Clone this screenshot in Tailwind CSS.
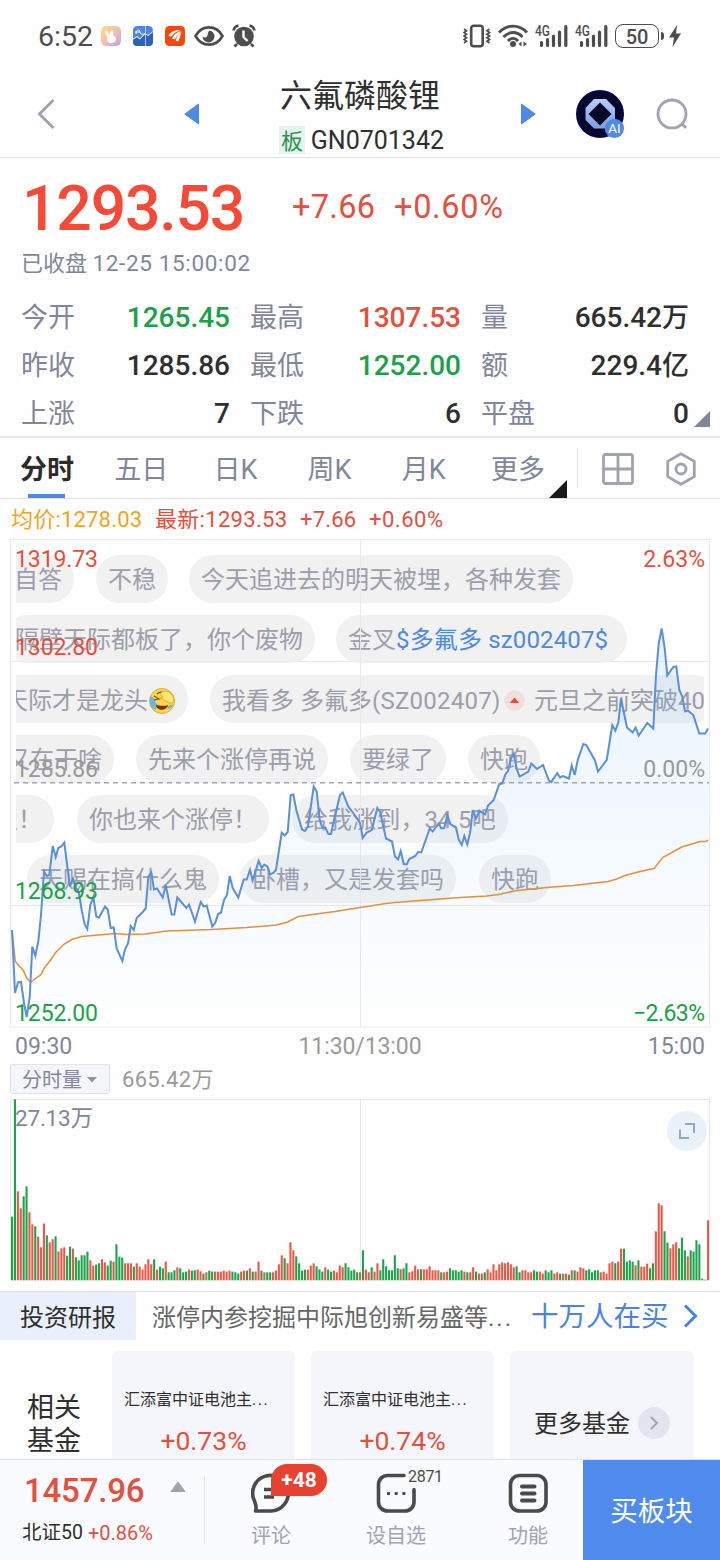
<!DOCTYPE html>
<html lang="zh-CN">
<head>
<meta charset="utf-8">
<title>六氟磷酸锂</title>
<script src="https://cdn.jsdelivr.net/npm/@tailwindcss/browser@4"></script>
</head>
<body class="w-[720px] h-[1560px] overflow-hidden bg-[#fefefe] font-[Roboto,'Noto_Sans_CJK_SC',sans-serif] text-[#2f2f2f] flex flex-col">

<!-- status bar -->
<div class="h-[72px] flex items-center shrink-0 pl-[38px] pr-[39px] text-[#4d4d4d]">
  <span class="text-[28.5px] leading-none w-[63px] pt-[2px]">6:52</span>
  <svg class="w-5 h-5" viewBox="0 0 20 20"><defs><linearGradient id="rb" x1="0" y1="0" x2="1" y2="1"><stop offset="0" stop-color="#fbe07a"/><stop offset=".5" stop-color="#f3bfb0"/><stop offset="1" stop-color="#b9a6f0"/></linearGradient></defs><rect width="20" height="20" rx="5" fill="url(#rb)"/><path d="M4.500 5c1.200-1 3 1.500 4.200 4 .2-2.500.8-5 2.300-4.800s1.500 3 1.200 5.300c2.300.8 3.300 3 2.600 5-1 2.800-5.800 3.300-7.800 1.200-1.200-1.300-1-3-.2-4.300C5.300 9.500 3.300 6.200 4.500 5z" fill="#fff"/></svg>
  <svg class="w-5 h-5 ml-3" viewBox="0 0 20 20"><rect width="20" height="20" rx="4.500" fill="#4a86e0"/><path d="M0 14l4-2.500 3 2 5-5 3 1.500 5-4V16a4 4 0 0 1-4 4H4a4 4 0 0 1-4-4z" fill="#2f63b8"/><path d="M0 13l4-2.500 3 2.500 5-5.500 3 2 5-4M2 6h5M3 8c0-5 4-5 4-2s3 2 5 2" fill="none" stroke="#fff" stroke-width="1"/><path d="M12.500 0v20" stroke="#cfe0fa" stroke-width=".8"/></svg>
  <svg class="w-5 h-5 ml-3" viewBox="0 0 20 20"><rect width="20" height="20" rx="4.500" fill="#f5480c"/><path d="M3.500 10C5 6 10 3.500 15.500 4.500 12 5.500 8.500 7 6.500 10.500zM7 12.500C8.500 9 12 6 16 5 13.500 7.500 11.500 10 10 13.500zM10.800 14.500c.5-3.500 2.700-6.500 5.400-8.700-.8 3.200-1.200 6.700-3.200 9.700z" fill="#fff"/></svg>
  <svg class="w-[30px] h-5 ml-[9px]" viewBox="0 0 30 20"><path d="M1.500 10C8-1.500 22-1.500 28.500 10 22 21.500 8 21.500 1.500 10z" fill="none" stroke="#4d4d4d" stroke-width="2.600"/><path d="M15.500 4.500a6 6 0 1 1-7 6c1.500 1.500 4 1 4.800-.6 .9-1.800.2-4 2.200-5.400z" fill="#4d4d4d"/></svg>
  <svg class="w-6 h-6 ml-2" viewBox="0 0 24 24"><circle cx="12" cy="12.500" r="9.800" fill="#4d4d4d"/><path d="M1.500 6.500C2 4 4 2 6.500 1.500M17.500 1.500C20 2 22 4 22.500 6.500M5 20l-2.500 2.500M19 20l2.500 2.500" stroke="#4d4d4d" stroke-width="2.600" fill="none"/><path d="M11.500 6.500v6.500l4 4" stroke="#fefefe" stroke-width="2.400" fill="none"/></svg>
  <div class="flex-1"></div>
  <svg class="w-7 h-6 mr-[7px]" viewBox="0 0 28 24" fill="none" stroke="#4d4d4d"><rect x="8.200" y="1.800" width="11.500" height="20.500" rx="2.500" stroke-width="2.600"/><path d="M1 5l2.500 1.700L1 8.500l2.500 1.700L1 12l2.500 1.700L1 15.500l2.500 1.700L1 19M26.500 5L24 6.700l2.500 1.800L24 10.200l2.500 1.800-2.500 1.700 2.500 1.800-2.500 1.700 2.500 1.800" stroke-width="1.700"/></svg>
  <svg class="w-[30px] h-6 mr-[7px]" viewBox="0 0 30 24" fill="none" stroke="#4d4d4d" stroke-width="2.900"><path d="M1 8.500C9 0 21 0 29 8.500M5.500 13c5.500-6 13.500-6 19 0M10 17c3-3.500 7-3.500 10 0"/><circle cx="15" cy="20" r="3" fill="#4d4d4d" stroke="none"/><path d="M23.500 17.500v5l-3-2.500zM25.500 17.500v5l3.500-2.500z" fill="#4d4d4d" stroke="none"/></svg>
  <svg class="w-[33px] h-6 mr-[7px] overflow-visible" viewBox="0 0 33 24"><text transform="scale(.8 1)" x="0" y="11.500" font-size="15" font-weight="500" fill="#4d4d4d">4G</text><g stroke="#4d4d4d" stroke-width="3.200" stroke-linecap="round"><path d="M6.500 18.500v3M12.500 15.500v6M18.500 12v9.500M24.500 8v13.500M30.800 2.500v19"/></g></svg>
  <svg class="w-[33px] h-6 mr-[7px] overflow-visible" viewBox="0 0 33 24"><text transform="scale(.8 1)" x="0" y="11.500" font-size="15" font-weight="500" fill="#4d4d4d">4G</text><g stroke="#4d4d4d" stroke-width="3.200" stroke-linecap="round"><path d="M6.500 18.500v3M12.500 15.500v6M18.500 12v9.500M24.500 8v13.500M30.800 2.500v19"/></g></svg>
  <div class="w-[44px] h-6 rounded-[8px] border-[1.500px] border-[#4d4d4d] flex items-center justify-center text-[20px] font-medium leading-none pt-px">50</div>
  <div class="w-[3px] h-2 rounded-r ml-0.5 bg-[#4d4d4d]"></div>
  <svg class="w-3 h-6 ml-[5px]" viewBox="0 0 12 24"><path d="M8 1L0 13.500h5L3.500 23 12 9.500H7z" fill="#4d4d4d"/></svg>
</div>

<!-- header -->
<div class="h-[86px] shrink-0 border-b border-[#e2e2e4] flex items-start">
  <svg class="w-[18px] h-8 ml-[37px] mt-[26px]" viewBox="0 0 18 32"><path d="M16.500 2L2.500 16l14 14" fill="none" stroke="#a1a3b0" stroke-width="3"/></svg>
  <svg class="w-4 h-[22px] ml-[129px] mt-[31px]" viewBox="0 0 16 22"><path d="M14.500 1v20L.8 11z" fill="#4f89e6" stroke="#4f89e6" stroke-linejoin="round"/></svg>
  <div class="ml-[79px] w-[165px] flex flex-col">
    <div class="text-[32px] leading-[44px] h-[44px] pl-px mt-[2px] whitespace-nowrap">六氟磷酸锂</div>
    <div class="flex items-center h-7 mt-[8px]">
      <span class="w-[26px] h-7 bg-[#e6f2ec] text-[#2a9150] text-[22px] leading-[31px] text-center">板</span>
      <span class="ml-[6px] text-[25px] leading-7 pt-px whitespace-nowrap">GN0701342</span>
    </div>
  </div>
  <svg class="w-4 h-[22px] ml-[76px] mt-[31px]" viewBox="0 0 16 22"><path d="M1.500 1v20L15.200 11z" fill="#4f89e6" stroke="#4f89e6" stroke-linejoin="round"/></svg>
  <svg class="w-12 h-12 ml-[40px] mt-[18px]" viewBox="0 0 48 48"><defs><linearGradient id="oc" x1="0" y1="0" x2="0" y2="1"><stop offset="0" stop-color="#b7ccf8"/><stop offset="1" stop-color="#7f9fe0"/></linearGradient><radialGradient id="nv"><stop offset="0" stop-color="#05051c"/><stop offset=".75" stop-color="#05052a"/><stop offset="1" stop-color="#050548"/></radialGradient></defs><circle cx="24" cy="24" r="24" fill="url(#nv)"/><path d="M18 9h12l9 9v12l-9 8.500H18L9.500 30V18z" fill="url(#oc)"/><path d="M24 12.500L35.500 24 24 35.500 12.500 24z" fill="#08082a"/><circle cx="38.400" cy="38.400" r="9.600" fill="#4f8ae6"/><text x="38.400" y="43" font-size="13.500" fill="#fff" text-anchor="middle">AI</text></svg>
  <svg class="w-8 h-8 ml-[32px] mt-[26px]" viewBox="0 0 32 32"><circle cx="16" cy="16" r="14" fill="none" stroke="#a1a3b0" stroke-width="2.800"/><path d="M25.500 25.500l4.500 4.500" stroke="#a1a3b0" stroke-width="2.800"/></svg>
</div>

<!-- quote -->
<div class="h-[278px] shrink-0 relative">
  <div class="flex items-center h-[98px] pl-[22px] text-[#e2503f] whitespace-nowrap">
    <span class="text-[62.500px] font-medium leading-none w-[270px] pt-[4px] text-[#f54a38] tracking-[-1.200px]">1293.53</span>
    <span class="text-[32.500px] leading-none w-[102px] tracking-[0.300px]">+7.66</span>
    <span class="text-[32.500px] leading-none tracking-[0.700px]">+0.60%</span>
  </div>
  <div class="h-[30px] mt-[-8px] pl-[21px] text-[22px] leading-[30px] text-[#81869a]">已收盘 <span class="text-[22.500px] tracking-[0.650px]">12-25 15:00:02</span></div>
  <div class="mt-[16px] pl-[21px] grid grid-cols-[209px_211px_208px] gap-x-5 text-[28px] font-medium leading-[48px] [&_b]:text-[27px] [&_b]:font-normal [&_b]:text-[#81869a] [&_p]:flex [&_p]:justify-between [&_p]:h-12 [&_i]:not-italic">
    <p><b>今开</b><i class="text-[#1da04a]">1265.45</i></p><p><b>最高</b><i class="text-[#e2503f]">1307.53</i></p><p><b>量</b><i>665.42<span class="text-[27px]">万</span></i></p>
    <p><b>昨收</b><i>1285.86</i></p><p><b>最低</b><i class="text-[#1da04a]">1252.00</i></p><p><b>额</b><i>229.4<span class="text-[27px]">亿</span></i></p>
    <p><b>上涨</b><i>7</i></p><p><b>下跌</b><i>6</i></p><p><b>平盘</b><i>0</i></p>
  </div>
  <svg class="absolute right-[10px] bottom-[9px] w-4 h-4" viewBox="0 0 16 16"><path d="M16 0v16H0z" fill="#81869a"/></svg>
</div>
<div class="h-0.5 shrink-0 bg-[#e6e6ee]"></div>

<!-- period tabs -->
<div class="h-[61px] shrink-0 flex border-b border-[#e2e2e4]">
  <div class="grid grid-cols-6 grid-rows-[60px] w-[565px] h-[60px] text-center text-[27px] leading-[65px] text-[#81869a] [&>div]:h-[60px]">
    <div class="relative font-bold text-[#2b2b2b]">分时<span class="absolute left-[28px] bottom-0 w-[37px] h-1 bg-[#4f89e0]"></span></div>
    <div>五日</div><div>日K</div><div>周K</div><div>月K</div>
    <div class="relative">更多<svg class="absolute -right-0.5 bottom-0 w-[18px] h-[18px]" viewBox="0 0 18 18"><path d="M18 0v18H0z" fill="#1a1a1a"/></svg></div>
  </div>
  <div class="w-px h-10 bg-[#e2e2e6] mt-[10px] ml-[12px]"></div>
  <svg class="w-8 h-8 ml-[24px] mt-[15px]" viewBox="0 0 32 32" fill="none" stroke="#a1a3b0" stroke-width="2.800"><rect x="1.500" y="1.500" width="29" height="29" rx="2"/><path d="M16 1v30M1 16h30"/></svg>
  <svg class="w-8 h-[34px] ml-[31px] mt-[14px]" viewBox="0 0 32 34" fill="none" stroke="#a1a3b0" stroke-width="2.800"><path d="M16 1.800l13.300 7.600v15.200L16 32.200 2.700 24.600V9.400z" stroke-linejoin="round"/><circle cx="16" cy="17" r="5"/></svg>
</div>

<div class="h-[40px] shrink-0 flex items-center pt-[2px] pl-[11px] text-[22px] leading-none text-[#e2503f] whitespace-nowrap">
  <span class="text-[#eea51f] w-[144px] tracking-[0.200px]">均价:1278.03</span>
  <span class="w-[145px] tracking-[0.300px]">最新:1293.53</span>
  <span class="w-[69px] tracking-[0.200px]">+7.66</span>
  <span class="tracking-[0.500px]">+0.60%</span>
</div>

<!-- intraday chart with scrolling comments behind the line -->
<div class="relative h-[489px] shrink-0">
  <div class="absolute left-4 top-[16px] w-[688px] overflow-hidden flex flex-col gap-3 text-[24px] leading-[50px] text-[#9c9eab] whitespace-nowrap [&>div]:flex [&>div]:gap-[22px] [&>div]:h-12 [&_p]:h-12 [&_p]:px-3 [&_p]:rounded-full [&_p]:bg-[#f1f1f1] [&_p]:shrink-0">
    <div class="-ml-[38px]"><p>自自答</p><p>不稳</p><p class="-ml-px">今天追进去的明天被埋，各种发套</p></div>
    <div class="-ml-[13px]"><p>隔壁天际都板了，你个废物</p><p class="-ml-px">金叉<span class="inline-block w-[219px] text-[#4f89e0] tracking-[0.150px]">$多氟多 sz002407$</span></p></div>
    <div class="-ml-[24px]"><p class="flex items-center pt-[3px]">天际才是龙头<svg class="w-7 h-7" viewBox="0 0 28 28"><circle cx="14" cy="14" r="12.500" fill="#f8d84a" stroke="#e0ad2c"/><path d="M7 17c4 2 9 2.500 13 1-1 6-11 7-13-1z" fill="#7a3014"/><path d="M3 9c-3 6-1 11 5 14 1-6 0-11-5-14z" fill="#69b4ea"/><path d="M19 22c3 0 5-2 6-4-2-1-5 0-6 4z" fill="#69b4ea"/><path d="M6 9l5 3-5 1M9 7c2-2 5-2 7-1" stroke="#805019" fill="none" stroke-width="1.200"/><path d="M12 7c3-4 8-4 11 0 4 4 3 8 1 9-3 1-6-3-12-5 0-1 3 0 3-1l-3-3z" fill="#fbe573" stroke="#d9a42b" stroke-width=".8"/></svg></p><p class="flex items-center pt-[3px]">我看多 多氟多<span class="w-[129px] tracking-[0.250px]">(SZ002407)</span><svg class="w-[21px] h-[21px] mx-[3px]" viewBox="0 0 21 21"><circle cx="10.500" cy="10.500" r="10.300" fill="#f1dede"/><path d="M10.500 7.500l4.800 5.500H5.700z" fill="#e2503f"/></svg><span class="ml-[6px]">元旦之前突破40</span></p></div>
    <div class="-ml-[22px]"><p>又在干啥</p><p>先来个涨停再说</p><p>要绿了</p><p>快跑</p></div>
    <div class="-ml-[34px]"><p>板！</p><p class="ml-px">你也来个涨停！</p><p class="ml-px"><span class="tracking-[0.100px]">给我涨到，34.5吧</span></p></div>
    <div class="ml-[11px]"><p>天赐在搞什么鬼</p><p class="-ml-px">卧槽，又是发套吗</p><p class="ml-px">快跑</p></div>
  </div>
  <svg class="absolute inset-0 w-[720px] h-[489px]" viewBox="0 539 720 489">
    <defs><linearGradient id="area" gradientUnits="userSpaceOnUse" x1="0" y1="628" x2="0" y2="1027"><stop offset="0" stop-color="#4fa8ff" stop-opacity=".13"/><stop offset=".4" stop-color="#5fb0ff" stop-opacity=".08"/><stop offset=".8" stop-color="#60b8ff" stop-opacity=".025"/><stop offset="1" stop-color="#60b8ff" stop-opacity="0"/></linearGradient></defs>
    <g fill="none" stroke="#e9e9ef" stroke-width="1"><rect x="10.500" y="539.500" width="699" height="487.500"/><path d="M360.500 540v487M10 661.500h699M10 905.500h699"/></g>
    <path id="fill" fill="url(#area)"/>
    <path d="M14 782.800h695" stroke="#a3a5b2" stroke-width="1.500" stroke-dasharray="5 4"/>
    <polyline fill="none" stroke="#e0913f" stroke-width="1.500" points="12,930 15.300,961.500 23.300,970.500 26.700,978 30.700,982 41,974.500 44.300,968 50.700,960 55.700,952.500 64.300,944 71.700,939.500 81.700,936.500 115,933.500 126.700,934.500 145,934 166.700,931 211.700,929.500 246.700,927.500 276.700,925 287.700,922 298.300,916.500 316,914 335,911.500 360,907.500 386,903.500 395,902.500 426.700,900 460,897.500 486.700,896 498.300,894.500 516.700,890.500 546.700,887.500 573.300,885.500 590,883.500 608.300,881.500 616.700,879 625,875.500 640,871.500 654,868.500 662.700,857.500 681.700,847 700,841.500 706,841.500 708,840"/>
    <polyline id="price" fill="none" stroke="#5a8fdb" stroke-width="2" points="12,930 15,993 18,982.500 21,982 24,1003 26.700,1017 29.700,997 32.300,946.500 35.300,956 38.300,941.500 41,915 44,871.500 46.700,876 49.300,875 52.700,846 55.700,857 58.300,848 61.300,846.500 64.300,842.500 67.300,866.500 70,886.500 73,878.500 76,888 78.700,891.500 81.700,910 84.700,924.500 87.300,929 90.300,905 93.300,897 96.300,916.500 99,917.500 105,906.500 107.700,909.500 110.700,928 113.700,927.500 116.700,948.500 122.300,961 125,949.500 128,943.500 130.700,926 133.700,930 136.700,918 142.700,912 145.700,908.500 148.300,876.500 151.300,872.500 154,889.500 157,888.500 162.700,897.500 165.700,885 171.700,914.500 174.300,914.500 177.300,897.500 186.300,908 189,904.500 195,921.500 200.700,902 203.700,906.500 206.700,905.500 212.300,926.500 215.300,922.500 218,914 221,912.500 224,900 227,895 229.700,876 232.700,888 238.300,897.500 243.700,879.500 246.700,879.500 250,870 252.700,880.500 258.700,861 261.700,868 264.300,864.500 267.300,866.500 270,874.500 273.300,873 276,870 281.700,832.500 284.700,835.500 287.700,832 290.700,795 293.300,794.500 296.300,810 302,829.500 305,831 308,826.500 313.700,786.500 316.700,791.500 319.700,820 322.300,827.500 325.300,827.500 328.300,834 331,834 334,820 340,795 342.700,792.500 348.300,806.500 354,814 360,823 362.700,838 366.700,832.500 371.700,830 377.300,808 380,811.500 386,838.500 392,841.500 395,856.500 398,859.500 400.700,851 403.700,864 406.700,864.500 409.300,859 415.300,856 418,852 421.300,852.500 429.700,828.500 432.700,831.500 438.700,823.500 441.300,828.500 444.300,828 447.300,815 450.300,824 456,827.500 458.700,839.500 461.700,845 464.300,836 467.300,844.500 470.300,831.500 472.700,810 476,818.500 479.300,810.500 485,814.500 488,805.500 493.700,800 499.300,784 502.300,783.500 505.300,774.500 508,771 511,758.500 513.700,754 516.700,769 519.700,776.500 528.300,771.500 531.300,763.500 537,769 543,765 549,780.500 551.300,782 557.300,773 560,777.500 563,776 569,778.500 571.700,765.500 574.700,775 577.700,760 583.300,744 586.300,745 595,760.500 598,771.500 606.700,760 612.300,725 615.300,730.500 618.300,722.500 621,698.500 627,727.500 632.700,732.500 635.700,727.500 638.700,735.500 647.300,723 653.300,728.500 656,675 658.700,643.500 661.700,628.500 664.700,648.500 667.300,675.500 673.300,667 676.300,666.500 679.300,690 682.300,696.500 685,711.500 687.700,710.500 693.300,715 699.300,733.500 705.300,733.500 708,728.500"/>
    <g font-size="23" fill="#e2503f"><text x="15" y="566.500" textLength="83">1319.73</text><text x="15" y="655" textLength="83">1302.80</text><text x="705" y="566.500" text-anchor="end">2.63%</text>
    <g fill="#999"><text x="15" y="777" textLength="83">1285.86</text><text x="705" y="777" text-anchor="end">0.00%</text></g>
    <g fill="#1da04a"><text x="15" y="899" textLength="83">1268.93</text><text x="15" y="1021" textLength="83">1252.00</text><text x="705" y="1021" text-anchor="end" textLength="72">−2.63%</text></g></g>
  </svg>
</div>
<div class="h-[36px] shrink-0 grid grid-cols-3 px-[15px] text-[23px] leading-[37px] text-[#81869a]">
  <span>09:30</span><span class="text-center text-[#999] tracking-[-0.100px]">11:30/13:00</span><span class="text-right">15:00</span>
</div>

<!-- volume -->
<div class="h-[35px] shrink-0 flex items-start pl-[10px]">
  <div class="w-[100px] h-[30px] rounded-[3px] border border-[#dfe1ee] bg-[#f5f6fb] text-[#81869a] text-[20px] leading-[30px] flex items-center pl-[11px] pt-px">分时量<svg class="w-[10px] h-[6px] ml-[5px]" viewBox="0 0 10 6"><path d="M0 0h10L5 5.500z" fill="#8f93a3"/></svg></div>
  <span class="ml-3 text-[22px] leading-[32px] text-[#999] tracking-[0.300px]">665.42万</span>
</div>
<div class="relative h-[193px] shrink-0 border-b border-[#e2e2e4]">
  <svg class="w-[720px] h-[191px]" viewBox="0 0 720 191">
    <path d="M10.500 181V.5h699V181M360.500 0v181" fill="none" stroke="#e6e6ec"/>
    <g id="bars"></g>
    <text x="15" y="26.500" font-size="22.500" fill="#81869a" textLength="78">27.13万</text>
  </svg>
  <div class="absolute right-[13px] top-[12px] w-10 h-10 rounded-full bg-[#eaf1fb] flex items-center justify-center"><svg class="w-4 h-4" viewBox="0 0 16 16" fill="none" stroke="#8aaacf" stroke-width="2"><path d="M6 1h9v9M1 6.500V15h9"/></svg></div>
</div>

<!-- research strip -->
<div class="h-12 shrink-0 flex items-center whitespace-nowrap">
  <div class="w-[136px] h-12 bg-[#e9effc] text-[24px] leading-[52px] pl-5">投资研报</div>
  <div class="ml-4 w-[379px] text-[24px] leading-[48px] pt-1 text-[#666]">涨停内参挖掘中际旭创新易盛等<span class="tracking-[2px]">...</span></div>
  <div class="text-[27.500px] leading-[48px] pt-[2px] text-[#4d83e0]">十万人在买</div>
  <svg class="w-4 h-6 ml-[14px]" viewBox="0 0 16 24"><path d="M2 1.500L12.500 12 2 22.500" fill="none" stroke="#4d83e0" stroke-width="3"/></svg>
</div>

<!-- related funds -->
<div class="h-[119px] shrink-0 pt-[11px] flex whitespace-nowrap overflow-hidden">
  <div class="w-[112px] pl-[27px] pt-[41px] text-[27px] leading-[33px]">相关<br>基金</div>
  <div class="w-[183px] h-[120px] bg-[#f5f6fb] rounded-md pt-[37px] text-center"><div class="text-[16px] leading-6 text-left pl-3">汇添富中证电池主<span class="tracking-[1.500px]">...</span></div><div class="text-[26.500px] leading-8 mt-[13px] text-[#e2503f]">+0.73%</div></div>
  <div class="w-[183px] h-[120px] ml-4 bg-[#f5f6fb] rounded-md pt-[37px] text-center"><div class="text-[16px] leading-6 text-left pl-3">汇添富中证电池主<span class="tracking-[1.500px]">...</span></div><div class="text-[26.500px] leading-8 mt-[13px] text-[#e2503f]">+0.74%</div></div>
  <div class="w-[184px] h-[143px] ml-4 bg-[#f5f6fb] rounded-md pl-6 flex items-center text-[24px] leading-8"><span class="pt-[3px]">更多基金</span><span class="ml-2 w-8 h-8 rounded-full bg-[#e4e4f0] flex items-center justify-center"><svg class="w-2.5 h-4" viewBox="0 0 10 16"><path d="M2 2l6 6-6 6" fill="none" stroke="#a1a3b0" stroke-width="2"/></svg></span></div>
</div>

<!-- bottom bar -->
<div class="h-[101px] shrink-0 border-t border-[#e2e3ea] bg-[#fafbfe] flex whitespace-nowrap">
  <div class="w-[204px] pl-[22px] pt-[12px]">
    <div class="flex"><span class="text-[33px] leading-[38px] font-medium text-[#e2503f] pl-[2px] w-[148px] tracking-[-0.200px]">1457.96</span><svg class="w-4 h-[11px] mt-[9px]" viewBox="0 0 16 11"><path d="M8 1l7 9.500H1z" fill="#a1a3b0" stroke="#a1a3b0" stroke-linejoin="round"/></svg></div>
    <div class="text-[20px] leading-7 mt-[9px] flex"><span class="w-[66px] text-[19.500px]">北证50</span><span class="text-[#e2503f]">+0.86%</span></div>
  </div>
  <div class="w-px h-[68px] mt-4 bg-[#e4e4ea]"></div>
  <div class="flex text-[20px] leading-6 text-[#a0a3b3] text-center">
    <div class="w-[132px] pt-[13px] relative"><svg class="w-10 h-10 mx-auto" viewBox="0 0 40 40" fill="none" stroke="#4a4a4a"><path d="M4.500 38c1.500-3.500.5-6-.8-9.500a17.800 17.800 0 1 1 16.300 9.500z" stroke-width="3.600" stroke-linejoin="round"/><path d="M13 16.500h14M13 24h10" stroke-width="3.600"/></svg><div class="mt-[11px]">评论</div>
      <span class="absolute left-[66px] top-[4px] w-[56px] h-8 rounded-[16px] rounded-bl-none bg-[#e8412f] text-white font-bold text-[21px] leading-8">+48</span></div>
    <div class="w-[118px] pt-[13px] relative"><svg class="w-10 h-10 mx-auto" viewBox="0 0 40 40" fill="none" stroke="#4a4a4a" stroke-width="3.600"><path d="M28 2.500H11.500a9 9 0 0 0-9 9V29a9 9 0 0 0 9 9H29a9 9 0 0 0 9-9V16.500" stroke-linecap="round"/><path d="M11 20.500h3M18.700 20.500h3M26.400 20.500h3" stroke-width="3"/></svg><div class="mt-[11px]">设自选</div>
      <span class="absolute left-[71px] top-[5px] text-[16px] leading-6 text-[#4a4a4a] tracking-[-0.300px]">2871</span></div>
    <div class="w-[128px] pt-[13px] pl-[18px]"><svg class="w-10 h-10 mx-auto" viewBox="0 0 40 40" fill="none" stroke="#4a4a4a" stroke-width="3.600" stroke-linecap="round"><rect x="2.500" y="2.500" width="35.500" height="35.500" rx="9"/><path d="M14 13.500h12.500M14 20.500h12.500M14 27.500h12.500" stroke-width="4"/></svg><div class="mt-[11px]">功能</div></div>
  </div>
  <div class="flex-1 bg-[#4f8bec] text-white text-[27.500px] leading-[104px] text-center">买板块</div>
</div>

<script>
  // close the price line down to the bottom of the plot for the shaded area
  const pts = document.getElementById('price').getAttribute('points');
  document.getElementById('fill').setAttribute('d', 'M12,1027 L' + pts.split(' ').join(' L') + ' L708,1027Z');

  // per-minute volume: direction + bar top, in thirds of a pixel
  const vol = 'g380 g28 r304 r355 g319 g289 r367 r403 g409 r440 r472 r401 g436 r457 r448 g439 r485 r475 r472 g497 g470 r476 g502 g511 g496 g496 g485 r511 r527 g524 g520 r508 r517 g527 g512 r515 g463 g500 g503 r520 r520 r520 g530 r520 r530 r539 r523 r508 r523 g508 r539 g530 g535 r515 g547 g547 g541 r532 g535 g547 g545 r539 g542 g541 r539 r544 g551 r547 g542 g545 r545 r545 r545 r542 r545 r542 g545 g547 g551 r545 r542 g542 r535 g545 r545 r515 g542 r547 g547 g547 r547 r542 r523 r496 g505 r520 r457 r481 g499 g520 g542 g539 r539 r527 r520 g529 g538 g545 r532 g539 g545 r542 r547 r527 r532 g520 g532 g542 g539 g547 r547 g481 r539 r547 g532 r545 r520 g541 g508 g529 g541 g541 g496 g535 r538 g535 g520 r547 r544 r527 r538 g538 r538 r538 r529 r541 r541 r541 g547 r547 r545 g535 g541 g541 g545 g541 r545 g547 r547 r532 g545 r551 r551 g547 r538 r547 r523 r541 r523 r517 r520 r517 r523 r532 g529 g547 r541 r541 r547 r547 g541 g545 r545 r551 g541 g547 g541 r551 r547 g551 r551 r551 g554 r541 g541 r545 r532 r535 g541 g538 g547 g541 g541 r547 r545 r551 r520 r515 g520 r515 r476 g476 g515 g511 g515 r526 g511 r530 r530 r521 g535 g520 r424 r340 r346 g424 g458 r475 r463 r457 g475 g443 g481 r499 g481 g485 g451 g463 g566 g569 r391'.split(' ');
  document.getElementById('bars').innerHTML = vol.map((v, i) => {
    const h = (571 - v.slice(1)) / 3;
    return `<rect x="${(11 + 2.9 * i).toFixed(2)}" y="${(181.3 - h).toFixed(2)}" width="2.1" height="${h.toFixed(2)}" fill="${v[0] === 'g' ? '#1ea24b' : '#e55a48'}"/>`;
  }).join('');
</script>
</body>
</html>
